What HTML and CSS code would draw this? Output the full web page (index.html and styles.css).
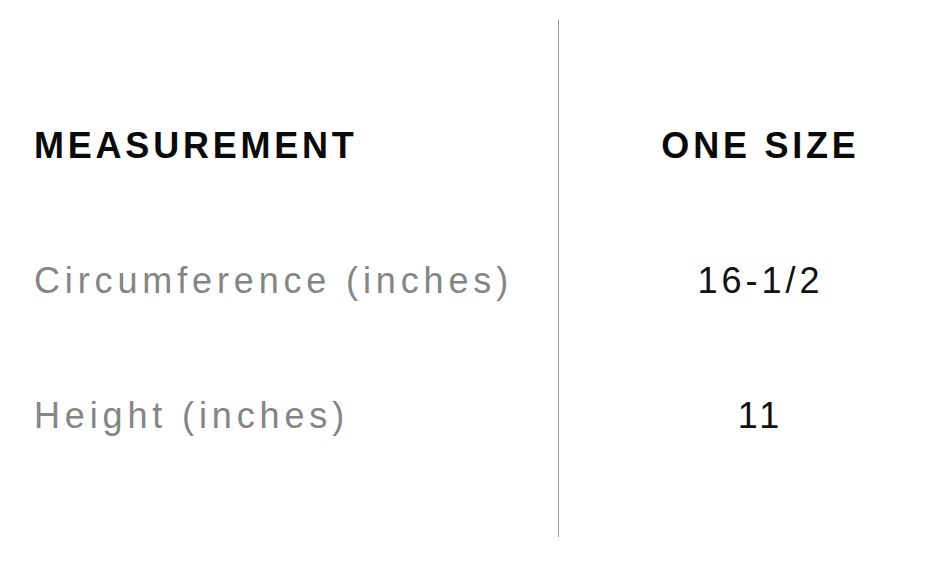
FILE: index.html
```html
<!DOCTYPE html>
<html lang="en">
<head>
<meta charset="utf-8">
<title>Size chart</title>
<link rel="stylesheet" href="styles.css">
</head>
<body>
<div class="sheet">
  <div class="col col-label">
    <div class="cell head">MEASUREMENT</div>
    <div class="cell label">Circumference (inches)</div>
    <div class="cell label">Height (inches)</div>
  </div>
  <div class="col col-value">
    <div class="cell head">ONE SIZE</div>
    <div class="cell value">16-1/2</div>
    <div class="cell value">11</div>
  </div>
</div>
</body>
</html>
```
FILE: styles.css
```css
html, body {
  margin: 0;
  background: #ffffff;
}
body {
  font-family: "Liberation Sans", Arial, Helvetica, sans-serif;
  font-size: 36px;
}
.sheet {
  display: flex;
  padding-top: 20px;
}
.col {
  display: flex;
  flex-direction: column;
  padding-top: 58px;
  padding-bottom: 54px;
}
.col-label {
  width: 524px;
  padding-left: 34px;
  border-right: 1px solid #959595;
}
.col-value {
  flex: 1;
  padding-left: 10px;
}
.cell {
  height: 135px;
  display: flex;
  align-items: center;
  white-space: nowrap;
}
.col-value .cell {
  justify-content: center;
}
.head {
  font-weight: bold;
  color: #0a0a0a;
  letter-spacing: 0.105em;
}
.label {
  color: #858585;
  letter-spacing: 0.135em;
}
.value {
  color: #111111;
  letter-spacing: 0.11em;
}
```
